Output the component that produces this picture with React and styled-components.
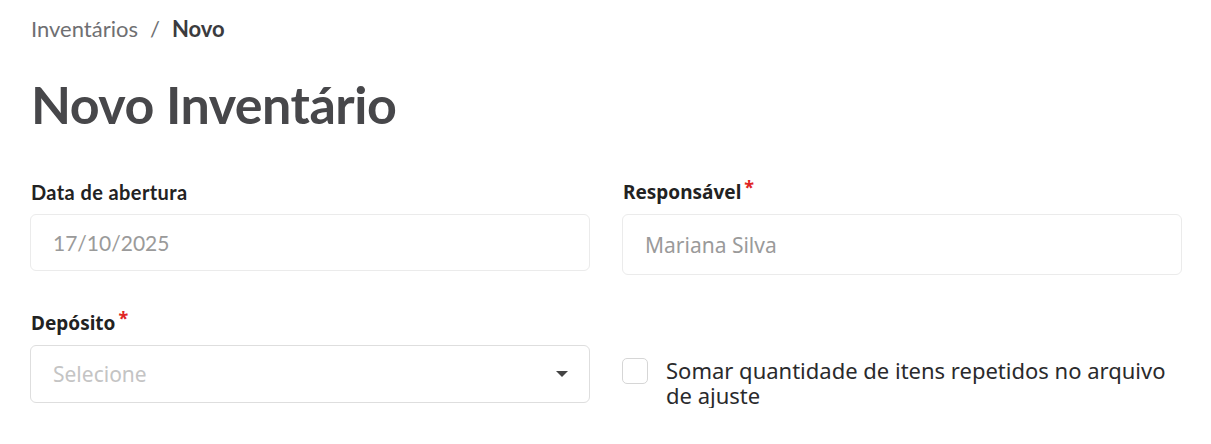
import styled, { createGlobalStyle } from 'styled-components';

const GlobalStyle = createGlobalStyle`
    body {
        margin: 0;
        background: #fff;
        font-family: "Noto Sans", sans-serif;
    }
`;

const Page = styled.div`
    padding: 14px 29px 0 30px;
    width: 1152px;
`;

const Breadcrumb = styled.nav`
    font-family: "Lato", sans-serif;
    font-size: 22px;
    line-height: 30px;
    color: #6f6f72;
    display: flex;
    gap: 12px;
    padding-left: 1px;
`;

const Current = styled.span`
    font-weight: 700;
    color: #3b3b3e;
`;

const Title = styled.h1`
    font-family: "Lato", sans-serif;
    font-size: 52px;
    font-weight: 700;
    letter-spacing: -0.5px;
    color: #47474a;
    margin: 30px 0 46px 1px;
    line-height: 60px;
`;

const Grid = styled.div`
    display: grid;
    grid-template-columns: 560px 560px;
    column-gap: 32px;
    row-gap: 36px;
    align-items: start;
`;

const Field = styled.div`
    display: flex;
    flex-direction: column;
    gap: 10px;
`;

const Label = styled.label`
    font-family: ${({ $round }) => ($round ? '"Lato", sans-serif' : '"Noto Sans", sans-serif')};
    font-size: ${({ $round }) => ($round ? 20 : 19)}px;
    letter-spacing: ${({ $round }) => ($round ? 0.4 : 0)}px;
    font-weight: 700;
    color: #222;
    line-height: 24px;
    padding-left: 1px;
`;

const Required = styled.sup`
    color: #e02424;
    font-size: 18px;
    margin-left: 3px;
    line-height: 0;
    vertical-align: 5px;
`;

const Input = styled.div`
    box-sizing: border-box;
    height: ${({ $h }) => $h}px;
    border: 1px solid #ebebeb;
    border-radius: 6px;
    display: flex;
    align-items: center;
    padding: 0 22px;
    font-family: ${({ $round }) => ($round ? '"Lato", sans-serif' : '"Noto Sans", sans-serif')};
    font-size: 21px;
    color: #9a9a9a;
`;

const Select = styled(Input)`
    border-color: #dedede;
    justify-content: space-between;
    color: #c4c4c4;
    padding-right: 21px;
`;

const Caret = styled.span`
    width: 0;
    height: 0;
    border-left: 6px solid transparent;
    border-right: 6px solid transparent;
    border-top: 6px solid #444;
`;

const CheckRow = styled.label`
    display: flex;
    align-items: flex-start;
    gap: 18px;
    margin-top: 47px;
    font-size: 22px;
    line-height: 25px;
    color: #2a2a2c;
`;

const Box = styled.span`
    flex: none;
    box-sizing: border-box;
    width: 26px;
    height: 26px;
    border: 1px solid #d6d6d6;
    border-radius: 5px;
    margin-top: 0;
`;

export default function App() {
    return <Page>
        <GlobalStyle />
        <Breadcrumb>
            <span>Inventários</span>
            <span>/</span>
            <Current>Novo</Current>
        </Breadcrumb>

        <Title>Novo Inventário</Title>

        <Grid>
            <Field>
                <Label $round>Data de abertura</Label>
                <Input $h={57} $round>17/10/2025</Input>
            </Field>
            <Field>
                <Label>Responsável<Required>*</Required></Label>
                <Input $h={61}>Mariana Silva</Input>
            </Field>
            <Field>
                <Label>Depósito<Required>*</Required></Label>
                <Select $h={58}>
                    <span>Selecione</span>
                    <Caret />
                </Select>
            </Field>
            <CheckRow>
                <Box />
                <span>Somar quantidade de itens repetidos no arquivo de ajuste</span>
            </CheckRow>
        </Grid>
    </Page>
}
